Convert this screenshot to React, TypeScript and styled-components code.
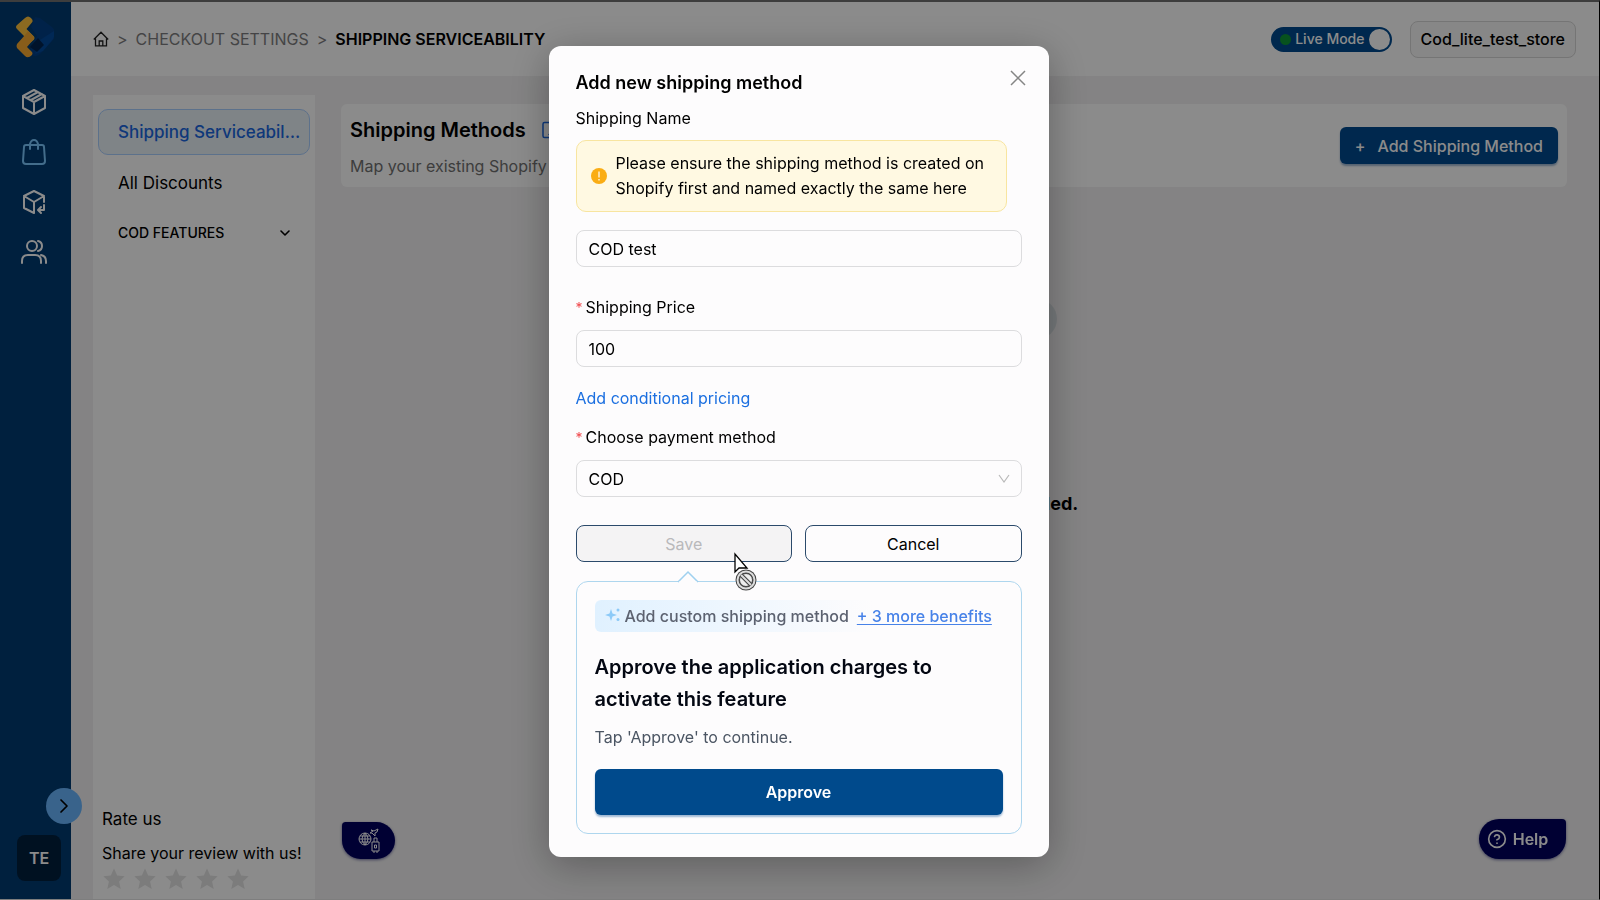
import React, { useState } from "react";
import styled, { createGlobalStyle } from "styled-components";
import { ChevronDown, ChevronRight, CircleHelp, Tablet } from "lucide-react";

const Global = createGlobalStyle`
  * { box-sizing: border-box; }
  body { margin: 0; font-family: Inter, "Liberation Sans", sans-serif; font-size: 16px; line-height: 24px; color: #000; background: #f2f1f2; overflow: hidden; }
  button, input, select { font: inherit; color: inherit; }
  h1, h2, h3, p { margin: 0; }
  a { text-decoration: none; color: inherit; }
`;

const Page = styled.div`
  display: flex;
  height: 100vh;
  border-top: 2px solid #707070;
  border-right: 1px solid #000;
  border-bottom: 1px solid #e8e8e8;
`;
const Rail = styled.nav`
  flex: 0 0 71px;
  display: flex;
  flex-direction: column;
  align-items: center;
  padding: 13px 3px 18px 0;
  background: #003b72;
`;
const RailLinks = styled.div`
  display: flex;
  flex-direction: column;
  gap: 22px;
  margin-top: 29px;
  color: #fff;
  a { display: block; height: 28px; }
  a:nth-child(2) { color: #7cc8ff; }
`;
const Expand = styled.button`
  display: flex;
  align-items: center;
  justify-content: center;
  flex: none;
  width: 36px;
  height: 36px;
  margin: auto -14px 11px auto;
  padding: 0;
  border: 0;
  border-radius: 50%;
  background: #6ab6ff;
  position: relative;
`;
const Avatar = styled.button`
  flex: none;
  width: 44px;
  height: 46px;
  margin-left: 10px;
  padding: 0;
  border: 0;
  border-radius: 8px;
  background: #00203e;
  color: #fff;
  font-weight: 600;
`;
const Main = styled.div`
  flex: 1;
  min-width: 0;
  display: flex;
  flex-direction: column;
`;
const Header = styled.header`
  flex: 0 0 74px;
  display: flex;
  align-items: center;
  padding: 0 23px 0 22px;
  background: #fff;
`;
const Crumbs = styled.nav`
  display: flex;
  align-items: center;
  gap: 8px;
  margin-right: auto;
  color: #7e7e80;
  svg { color: #222; display: block; }
  strong { font-weight: 600; color: #000; }
`;
const Live = styled.label`
  display: flex;
  align-items: center;
  gap: 4px;
  height: 25px;
  padding: 0 2px 0 9px;
  border-radius: 13px;
  background: #004a8f;
  color: #fff;
  font-size: 14px;
  font-weight: 500;
  &::before { content: ""; width: 11px; height: 11px; border-radius: 50%; background: #0d9638; }
  input { appearance: none; width: 21px; height: 21px; margin: 0; border-radius: 50%; background: #fff; }
`;
const Store = styled.button`
  height: 37px;
  margin-left: 18px;
  padding: 0 10px;
  border: 1px solid #d6d6d6;
  border-radius: 8px;
  background: #f8f8f8;
  font-weight: 500;
`;
const Content = styled.div`
  flex: 1;
  display: flex;
  gap: 26px;
  padding: 19px 32px 0 22px;
`;
const Menu = styled.aside`
  flex: 0 0 222px;
  min-width: 0;
  display: flex;
  flex-direction: column;
  padding: 14px 5px 6px;
  background: #fff;
`;
const MenuItem = styled.a<{ $active?: boolean }>`
  display: block;
  height: 46px;
  margin-bottom: 5px;
  padding: 10px 5px 10px 19px;
  border: 1px solid ${(p) => (p.$active ? "#aacfff" : "transparent")};
  border-radius: 10px;
  background: ${(p) => (p.$active ? "#eaf2f8" : "transparent")};
  color: ${(p) => (p.$active ? "#1b68e0" : "#000")};
  font-weight: ${(p) => (p.$active ? 500 : 400)};
  font-size: 17px;
  overflow: hidden;
  text-overflow: ellipsis;
  white-space: nowrap;
`;
const MenuGroup = styled.button`
  display: flex;
  justify-content: space-between;
  align-items: center;
  height: 44px;
  padding: 0 17px 0 20px;
  border: 0;
  background: none;
  font-size: 14px;
  font-weight: 500;
`;
const Rate = styled.section`
  margin: auto 0 0 4px;
  h2 { font-size: 17px; font-weight: 400; margin-bottom: 10px; }
`;
const Stars = styled.div`
  display: flex;
  gap: 7px;
  height: 26px;
  margin-top: 2px;
  color: #e4e4e4;
`;
const Body = styled.main`
  flex: 1;
  display: flex;
  flex-direction: column;
  padding-top: 9px;
`;
const Intro = styled.section`
  display: flex;
  align-items: center;
  height: 83px;
  padding: 0 9px;
  border-radius: 6px;
  background: #fff;
  h1 { display: flex; align-items: center; gap: 14px; padding-top: 2px; font-size: 20px; line-height: 28px; font-weight: 600; }
  h1 svg { color: #1b68e0; }
  p { margin-top: 10px; color: #717171; white-space: nowrap; }
`;
const AddButton = styled.button`
  display: flex;
  align-items: center;
  justify-content: center;
  gap: 12px;
  height: 37px;
  margin-left: auto;
  padding: 0 15px;
  border: 0;
  border-radius: 6px;
  background: #004a8f;
  box-shadow: 0 2px 2px #9bb4d0;
  color: #fff;
  font-weight: 500;
`;
const Empty = styled.section`
  display: flex;
  flex-direction: column;
  align-items: center;
  gap: 153px;
  padding: 112px 4px 0 0;
  h2 { font-size: 18px; font-weight: 700; }
  span { width: 210px; height: 40px; border-radius: 20px; background: #d8dee2; }
`;
const Floating = styled.button<{ $side: "left" | "right" }>`
  position: fixed;
  bottom: 41px;
  ${(p) => (p.$side === "left" ? "left: 342px; width: 53px; height: 37px; padding: 0; border-radius: 4px 20px 20px 20px;" : "right: 34px; width: 87px; height: 40px; padding: 0 10px 0 0; border-radius: 20px 4px 20px 20px;")}
  display: flex;
  align-items: center;
  justify-content: center;
  gap: 6px;
  border: 0;
  background: #00005e;
  box-shadow: 0 1px 3px #00005e88;
  color: #fff;
  font-weight: 600;
`;
const Mask = styled.div`
  position: fixed;
  inset: 0;
  z-index: 10;
  display: flex;
  justify-content: center;
  align-items: flex-start;
  padding: 46px 3px 0 0;
  background: rgba(0, 0, 0, 0.455);
`;
const Dialog = styled.form`
  position: relative;
  width: 500px;
  padding: 24px 27px 23px;
  border-radius: 12px;
  background: #fdfcfd;
  box-shadow: 0 8px 40px rgba(0, 0, 0, 0.3);
  h2 { font-size: 18px; line-height: 26px; font-weight: 600; margin-bottom: 10px; }
`;
const Close = styled.button`
  position: absolute;
  top: 21px;
  right: 20px;
  width: 22px;
  height: 22px;
  padding: 3px;
  border: 0;
  background: none;
  color: #858585;
  svg { display: block; }
`;
const Label = styled.label`
  display: block;
  margin-bottom: 10px;
  line-height: 24px;
  em { color: #f0484c; font-style: normal; font-size: 14px; margin-right: 3px; }
`;
const Notice = styled.div`
  display: flex;
  align-items: center;
  gap: 9px;
  margin: 0 15px 18px 0;
  padding: 10px 14px;
  border: 1px solid #f8e5a0;
  border-radius: 10px;
  background: #fff9e2;
  line-height: 25px;
  svg { flex: none; }
`;
const Field = styled.div`
  margin-bottom: 28px;
`;
const inputBox = `
  display: block;
  width: 100%;
  height: 37px;
  padding: 0 12px;
  border: 1px solid #dcdcde;
  border-radius: 8px;
  background: #fdfcfd;
  outline: 0;
`;
const Input = styled.input`${inputBox}`;
const SelectWrap = styled.div`
  display: grid;
  align-items: center;
  > * { grid-area: 1 / 1; }
  svg { justify-self: end; margin-right: 12px; pointer-events: none; }
`;
const Select = styled.select`
  ${inputBox}
  appearance: none;
`;
const Conditional = styled.a`
  display: block;
  margin: 19px 0 15px;
  color: #1b6fe0;
`;
const Buttons = styled.div`
  display: grid;
  grid-template-columns: 1fr 1fr;
  gap: 13px;
`;
const Outline = styled.button`
  height: 37px;
  border: 1px solid #2b4a6b;
  border-radius: 8px;
  background: #fdfcfd;
  &:disabled { background: #f4f3f4; color: #b9b9bb; }
`;
const Upsell = styled.section`
  position: relative;
  margin-top: 19px;
  padding: 18px;
  border: 1px solid #aed6ee;
  border-radius: 12px;
  h3 { font-size: 20px; line-height: 32px; font-weight: 600; color: #030712; margin: 19px 0 10px; }
  p { color: #4b5563; margin-bottom: 20px; }
`;
const Pointer = styled.svg`
  position: absolute;
  top: -12px;
  left: 100px;
`;
const Benefit = styled.div`
  display: flex;
  align-items: center;
  width: max-content;
  height: 32px;
  padding-left: 10px;
  border-radius: 6px;
  background: linear-gradient(90deg, #e0f1ff, #fdfcfd 70%);
  color: #5c6270;
  font-weight: 500;
  white-space: nowrap;
  svg { margin: 0 4px 3px 0; }
  a { margin-left: 8px; color: #4782e8; text-decoration: underline; text-underline-offset: 2px; }
`;
const Approve = styled.button`
  width: 100%;
  height: 46px;
  border: 0;
  border-radius: 6px;
  background: #004a8c;
  box-shadow: 0 2px 2px #9db8d4;
  color: #fff;
  font-weight: 600;
`;
const Cursor = styled.svg`
  position: absolute;
  left: 184px;
  top: 506px;
  pointer-events: none;
`;

const line = { fill: "none", stroke: "currentColor", strokeWidth: 2, strokeLinecap: "round", strokeLinejoin: "round" } as const;

const Logo = () => (
  <svg width="40" height="44" viewBox="-2 0 40 44" aria-label="Home">
    <path d="M19 2l5 1 12 9q6 6 1 13L25 38q-4 5-9 2l-3-3 8-16-6-9z" fill="#003f86" />
    <path d="M24 25l14-9q1 4-1 8L27 36l-8 3z" fill="#004a9c" />
    <path d="M22 23l-8 9 7 5 7-7z" fill="#002450" />
    <path d="M9 3q3-3 6 0l1.500 2q.5 2-1 3l-5 6 7 7q2 2 0 4l-6 5H4l5-8-8-8q-2-2 0-4z" fill="#ffc33d" />
    <path d="M9 20l3-4 5 5q2 2 0 4l-6 7 5 5q1 1 0 3-4 4-7 1l-8-8q-1-2 0-4z" fill="#f9ab30" />
  </svg>
);
const Box = () => (
  <svg width="28" height="28" viewBox="0 0 28 28" {...line}>
    <path d="M14 2l11 6v12l-11 6L3 20V8zM3 8l11 6 11-6M14 14v12M7 10l11-6M11 12l11-6" />
  </svg>
);
const Bag = () => (
  <svg width="28" height="28" viewBox="0 0 28 28" {...line}>
    <path d="M6 7h16q2 0 2 2l1 14q0 3-3 3H6q-3 0-3-3L4 9q0-2 2-2zM10 11V6q1-4 4-4t4 4v5" />
  </svg>
);
const ReturnBox = () => (
  <svg width="28" height="28" viewBox="0 0 28 28" {...line}>
    <path d="M24 14V8L14 3 4 8v12l10 5V14L4 8M14 14l10-6M24 17v5h-5M21 19l-3 3 3 3" />
  </svg>
);
const People = () => (
  <svg width="28" height="28" viewBox="0 0 28 28" {...line}>
    <circle cx="12" cy="8" r="5" />
    <path d="M18 3q4 1 4 5t-4 5M2 25v-2q0-6 6-6h7q6 0 6 6v2M21 17q5 1 5 6v2" />
  </svg>
);
const House = () => (
  <svg width="16" height="16" viewBox="0 0 16 16" fill="none" stroke="currentColor" strokeWidth="1.3">
    <path d="M.8 8.5L8 1.2l7.2 7.3M2.5 7.5v7.3h11V7.5M6.2 14.5V10h3.6v4.5" />
  </svg>
);
const Star = () => (
  <svg width="24" height="24" viewBox="0 0 24 24" fill="currentColor">
    <path d="M12 1.5l3.2 6.9 7.5.9-5.6 5.1 1.6 7.5-6.7-3.8-6.7 3.8 1.6-7.5L1.3 9.3l7.5-.9z" />
  </svg>
);
const Travel = () => (
  <svg width="22" height="25" viewBox="0 0 22 25" fill="none" stroke="currentColor" strokeWidth="1">
    <circle cx="7" cy="11" r="6" />
    <path d="M1 11h12M7 5v12M2 8h10M2 14h10M7 5q-6 6 0 12M7 5q6 6 0 12M13 2l3 1 4-2-1 3-2 1v3l-3-3-2 0 3-2zM14 14h7v9h-7zM16 14v-4h3v4M16.500 17h2v3h-2zM16 23v2M19 23v2" />
  </svg>
);

export default function App() {
  const [name, setName] = useState("COD test");
  const [price, setPrice] = useState("100");
  return (
    <>
      <Global />
      <Page>
        <Rail>
          <Logo />
          <RailLinks>
            <a href="#orders" aria-label="Orders"><Box /></a>
            <a href="#checkout" aria-label="Checkout"><Bag /></a>
            <a href="#returns" aria-label="Returns"><ReturnBox /></a>
            <a href="#customers" aria-label="Customers"><People /></a>
          </RailLinks>
          <Expand aria-label="Expand"><ChevronRight size={24} strokeWidth={1.7} /></Expand>
          <Avatar>TE</Avatar>
        </Rail>
        <Main>
          <Header>
            <Crumbs>
              <a href="#home" aria-label="Home"><House /></a>
              <span>&gt;</span>
              <a href="#settings">CHECKOUT SETTINGS</a>
              <span>&gt;</span>
              <strong>SHIPPING SERVICEABILITY</strong>
            </Crumbs>
            <Live>Live Mode<input type="checkbox" defaultChecked /></Live>
            <Store>Cod_lite_test_store</Store>
          </Header>
          <Content>
            <Menu>
              <MenuItem href="#shipping" $active>Shipping Serviceability</MenuItem>
              <MenuItem href="#discounts">All Discounts</MenuItem>
              <MenuGroup>COD FEATURES<ChevronDown size={16} strokeWidth={2.4} /></MenuGroup>
              <Rate>
                <h2>Rate us</h2>
                <p>Share your review with us!</p>
                <Stars>{[1, 2, 3, 4, 5].map((n) => <Star key={n} />)}</Stars>
              </Rate>
            </Menu>
            <Body>
              <Intro>
                <div>
                  <h1>Shipping Methods <Tablet size={18} /></h1>
                  <p>Map your existing Shopify s</p>
                </div>
                <AddButton><span>+</span>Add Shipping Method</AddButton>
              </Intro>
              <Empty>
                <span />
                <h2>No shipping methods added.</h2>
              </Empty>
            </Body>
          </Content>
        </Main>
      </Page>
      <Floating $side="left" aria-label="Travel"><Travel /></Floating>
      <Floating $side="right"><CircleHelp size={20} />Help</Floating>
      <Mask>
        <Dialog role="dialog" aria-labelledby="title" onSubmit={(e) => e.preventDefault()}>
          <h2 id="title">Add new shipping method</h2>
          <Close type="button" aria-label="Close">
            <svg width="16" height="16" viewBox="0 0 16 16" stroke="currentColor" strokeWidth="1.500"><path d="M1 1l14 14M15 1L1 15" /></svg>
          </Close>
          <Field>
            <Label htmlFor="name">Shipping Name</Label>
            <Notice>
              <svg width="16" height="16" viewBox="0 0 16 16"><circle cx="8" cy="8" r="8" fill="#faad14" /><path d="M8 3.500v6M8 11v1.500" stroke="#fff" strokeWidth="1.200" /></svg>
              Please ensure the shipping method is created on Shopify first and named exactly the same here
            </Notice>
            <Input id="name" value={name} onChange={(e) => setName(e.target.value)} />
          </Field>
          <Label htmlFor="price"><em>*</em>Shipping Price</Label>
          <Input id="price" value={price} onChange={(e) => setPrice(e.target.value)} />
          <Conditional href="#pricing">Add conditional pricing</Conditional>
          <Field>
            <Label htmlFor="payment"><em>*</em>Choose payment method</Label>
            <SelectWrap>
              <Select id="payment" defaultValue="COD"><option>COD</option><option>Prepaid</option></Select>
              <svg width="12" height="10" viewBox="0 0 12 10" fill="none" stroke="#b9b9b9" strokeWidth="1.200"><path d="M1 1l5 7 5-7" /></svg>
            </SelectWrap>
          </Field>
          <Buttons>
            <Outline disabled>Save</Outline>
            <Outline type="button">Cancel</Outline>
          </Buttons>
          <Upsell>
            <Pointer width="22" height="13" viewBox="0 0 22 13"><path d="M1 12L11 2l10 10" fill="#fdfcfd" stroke="#9fd0ef" strokeWidth="1.500" /><path d="M2 12.500h18" stroke="#fdfcfd" strokeWidth="2" /></Pointer>
            <Benefit>
              <svg width="16" height="16" viewBox="0 0 16 16" fill="#8ccaf8"><path d="M6 2l1.500 4.500L12 8l-4.500 1.500L6 14 4.500 9.500 0 8l4.500-1.500z" /><circle cx="13" cy="3" r="1.500" /><circle cx="13" cy="12.500" r="1.500" /></svg>
              Add custom shipping method <a href="#benefits">+ 3 more benefits</a>
            </Benefit>
            <h3>Approve the application charges to activate this feature</h3>
            <p>Tap 'Approve' to continue.</p>
            <Approve type="button">Approve</Approve>
          </Upsell>
          <Cursor width="26" height="40" viewBox="0 0 26 40">
            <path d="M2 2v18l4-4h8z" fill="#fff" stroke="#000" strokeWidth="1.300" />
            <circle cx="13" cy="28" r="10.500" fill="#444" />
            <circle cx="13" cy="28" r="8.500" fill="none" stroke="#ddd" strokeWidth="2" />
            <circle cx="13" cy="28" r="6.500" fill="#eee" stroke="#444" />
            <path d="M8 23l10 10" stroke="#444" strokeWidth="4" /><path d="M8 23l10 10" stroke="#ddd" strokeWidth="2" />
          </Cursor>
        </Dialog>
      </Mask>
    </>
  );
}
